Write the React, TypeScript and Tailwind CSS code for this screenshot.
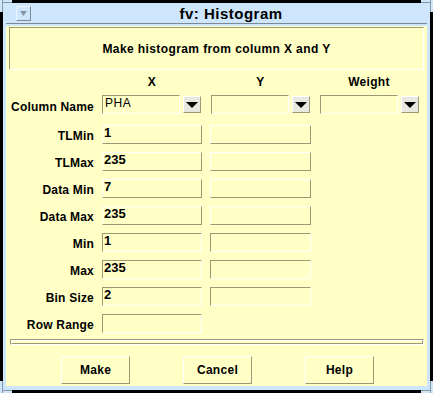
import React from 'react';

const sunken = 'border border-t-[#9c9a76] border-l-[#9c9a76] border-b-white border-r-white';
const raised = 'border border-t-white border-l-white border-b-[#9c9a76] border-r-[#9c9a76]';

const ROWS = [
  { label: 'TLMin', x: '1', y: true, sunk: false },
  { label: 'TLMax', x: '235', y: true, sunk: false },
  { label: 'Data Min', x: '7', y: true, sunk: false },
  { label: 'Data Max', x: '235', y: true, sunk: false },
  { label: 'Min', x: '1', y: true, sunk: true },
  { label: 'Max', x: '235', y: true, sunk: true },
  { label: 'Bin Size', x: '2', y: true, sunk: true },
  { label: 'Row Range', x: '', y: false, sunk: true },
];

function Combo({ value, className }: { value?: string; className?: string }) {
  return (
    <div className={`flex items-center ${className ?? ''}`}>
      <div className={`w-[78px] h-[19px] ${sunken} pl-[2px] text-[12px] leading-[15px] tracking-[0.5px]`}>
        {value}
      </div>
      <div className={`ml-[3px] w-[18px] h-[17px] bg-[#e8e8e0] ${raised} flex items-center justify-center`}>
        <svg width="12" height="6" viewBox="0 0 12 6">
          <polygon points="0,0 12,0 6,6" fill="#000" />
        </svg>
      </div>
    </div>
  );
}

export default function App() {
  return (
    <div className="relative w-[433px] h-[393px] bg-black p-[3px] font-['Liberation_Sans',Arial,sans-serif] text-black overflow-hidden">
      {/* window corners */}
      <div className="absolute left-0 top-0 w-[12px] h-[3px] bg-[#cde6fb] border-b border-[#8a97a3]" />
      <div className="absolute left-0 top-0 w-[3px] h-[12px] bg-[#cde6fb] border-r border-[#8a97a3]" />
      <div className="absolute right-0 top-0 w-[12px] h-[3px] bg-[#cde6fb] border-b border-[#8a97a3]" />
      <div className="absolute right-0 top-0 w-[3px] h-[12px] bg-[#cde6fb] border-l border-[#8a97a3]" />
      <div className="absolute left-0 bottom-0 w-[12px] h-[3px] bg-[#cde6fb] border-t border-[#8a97a3]" />
      <div className="absolute left-0 bottom-0 w-[3px] h-[12px] bg-[#cde6fb] border-r border-[#8a97a3]" />
      <div className="absolute right-0 bottom-0 w-[12px] h-[3px] bg-[#cde6fb] border-t border-[#8a97a3]" />
      <div className="absolute right-0 bottom-0 w-[3px] h-[12px] bg-[#cde6fb] border-l border-[#8a97a3]" />

      <div className="w-[427px] h-[387px] bg-[#cde6fb] px-[3px] pb-[4px] flex flex-col">
        {/* title bar */}
        <div className="h-[20px] flex items-center relative">
          <div className="ml-[10px] w-[15px] h-[15px] border border-t-[#eef6fd] border-l-[#eef6fd] border-b-[#7d8a96] border-r-[#7d8a96] flex items-center justify-center">
            <svg width="7" height="5" viewBox="0 0 7 5">
              <polygon points="0,0 7,0 3.5,5" fill="#8a949e" />
            </svg>
          </div>
          <div className="flex-1 text-center text-[15px] font-bold tracking-[0.5px] leading-none pl-[4px]">fv: Histogram</div>
        </div>
        <div className="h-px bg-[#7d8a96]" />
        <div className="h-[2px]" />

        {/* content */}
        <div className="h-[360px] bg-[#ffffc6] flex flex-col">
          <div className={`mt-[1px] mx-[3px] h-[43px] ${sunken} flex items-center justify-center text-[12px] font-bold tracking-[0.4px]`}>
            Make histogram from column X and Y
          </div>

          <div className="h-[22px] flex items-center text-[12px] font-bold pt-[2px] tracking-[0.3px]">
            <div className="w-[96px]" />
            <div className="w-[100px] text-center">X</div>
            <div className="ml-[8px] w-[101px] text-center">Y</div>
            <div className="ml-[9px] w-[98px] text-center">Weight</div>
          </div>

          <div className="mt-[3px] h-[19px] flex items-end">
            <div className="w-[88px] text-right text-[12px] font-bold leading-[14px] tracking-[0.2px]">Column Name</div>
            <Combo value="PHA" className="ml-[8px]" />
            <Combo className="ml-[10px]" />
            <Combo className="ml-[10px]" />
          </div>

          <div className="mt-[11px] flex flex-col gap-[8px]">
            {ROWS.map((r) => (
              <div key={r.label} className="h-[19px] flex items-center">
                <div className="w-[88px] text-right text-[12px] font-bold pt-[3px] tracking-[0.2px]">{r.label}</div>
                <div
                  className={`ml-[8px] w-[100px] h-[19px] ${r.sunk ? sunken : raised} pl-[1px] text-[13px] font-bold leading-[14px]`}
                >
                  {r.x}
                </div>
                {r.y && <div className={`ml-[8px] w-[101px] h-[19px] ${r.sunk ? sunken : raised}`} />}
              </div>
            ))}
          </div>

          <div className={`mt-[6px] ml-[4px] w-[414px] h-[6px] ${sunken}`}>
            <div className={`h-full ${raised}`} />
          </div>

          <div className="mt-[11px] ml-[55px] flex gap-[53px]">
            {['Make', 'Cancel', 'Help'].map((b) => (
              <div key={b} className={`w-[69px] h-[28px] ${raised} flex items-center justify-center text-[12px] font-bold tracking-[0.3px]`}>
                {b}
              </div>
            ))}
          </div>
        </div>
      </div>
    </div>
  );
}
